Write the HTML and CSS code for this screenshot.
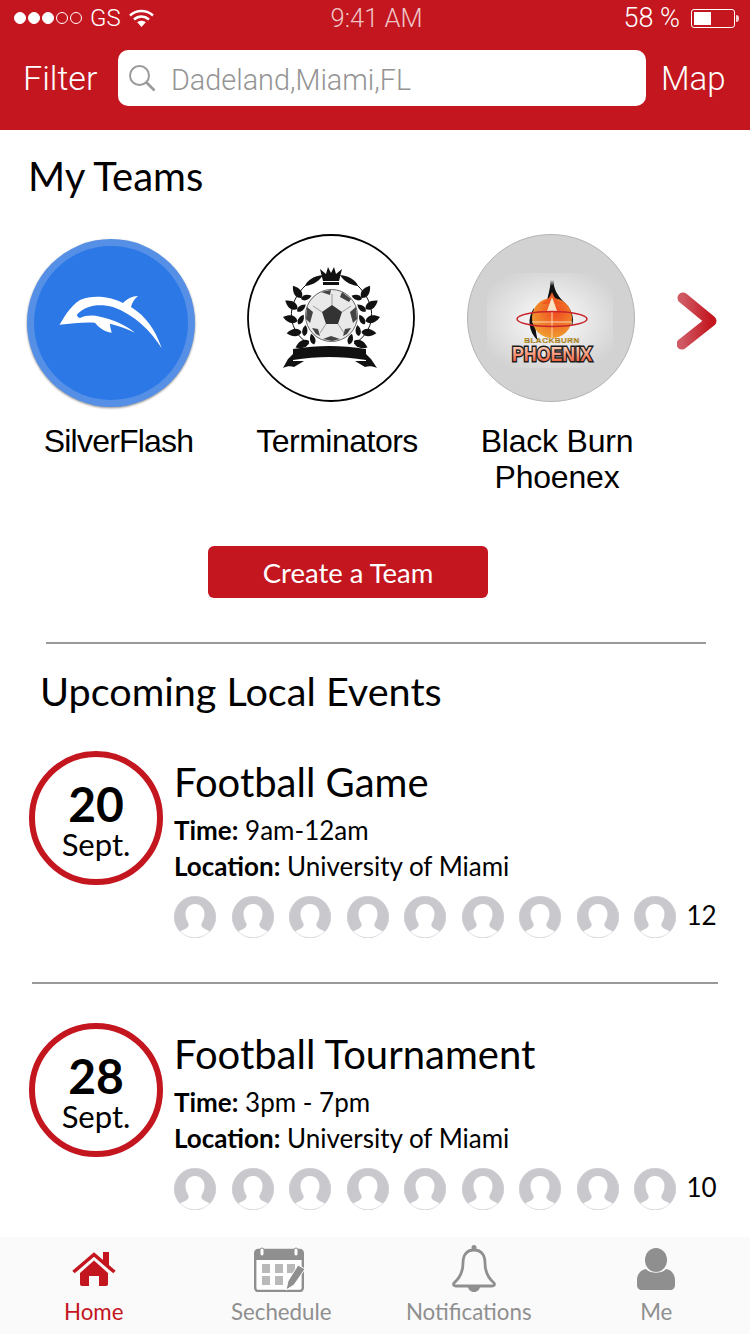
FILE: index.html
```html
<!DOCTYPE html>
<html lang="en">
<head>
  <meta charset="UTF-8">
  <meta name="viewport" content="width=device-width, initial-scale=1.0">
  <title>My Teams</title>
  <link rel="stylesheet" href="styles.css">
</head>
<body>
  <svg class="defs" width="0" height="0">
    <defs>
      <symbol id="avatar" viewBox="0 0 42 42">
        <circle cx="21" cy="21" r="21" fill="#c8c8cd"/>
        <path d="M21 8c-6 0-9.500 4.500-9.500 10 0 4 1.500 7 3 9.500 .5 2-.5 4-2.500 5-2.500 1.300-5 2-6 3.500C9 39.500 14.500 41.700 21 41.700S33 39.500 36 36c-1-1.500-3.500-2.200-6-3.500-2-1-3-3-2.500-5 1.500-2.500 3-5.500 3-9.500C30.500 12.500 27 8 21 8z" fill="#fff"/>
        <circle cx="21" cy="21" r="20.700" fill="none" stroke="#d4d4d8" stroke-width=".6"/>
      </symbol>
      <linearGradient id="chev" x1="0" x2="1" y1="0" y2="0">
        <stop offset="0" stop-color="#cf5a64"/>
        <stop offset="1" stop-color="#c3161f"/>
      </linearGradient>
      <radialGradient id="glow" cx=".5" cy=".5" r=".6">
        <stop offset="0" stop-color="#fdfdfd"/>
        <stop offset="1" stop-color="#d2d2d2"/>
      </radialGradient>
      <linearGradient id="phoenix-fill" x1="0" x2="0" y1="0" y2="1">
        <stop offset="0" stop-color="#fff1e0"/>
        <stop offset="1" stop-color="#ee4a22"/>
      </linearGradient>
      <radialGradient id="ball-fill" cx=".6" cy=".35" r=".7">
        <stop offset="0" stop-color="#f04a20"/>
        <stop offset="1" stop-color="#f0a030"/>
      </radialGradient>
      <path id="leaf" d="M0 0C5-3 5-9 0-15C-5-9-5-3 0 0z"/>
      <path id="leaf-small" d="M0 0C3.500-2 3.500-7 0-11C-3.500-7-3.500-2 0 0z"/>
    </defs>
  </svg>

  <div class="page">
    <header class="header">
      <div class="status-bar">
        <div class="status-left">
          <span class="dot on"></span><span class="dot on"></span><span class="dot on"></span><span class="dot"></span><span class="dot"></span>
          <span class="carrier">GS</span>
          <svg class="wifi" width="25" height="18" viewBox="0 0 25 18">
            <path d="M1 6.500C7.500 .5 17.500 .5 24 6.500" fill="none" stroke="#fff" stroke-width="2.400"/>
            <path d="M5 10.500c4.500-4 10.500-4 15 0" fill="none" stroke="#fff" stroke-width="2.400"/>
            <path d="M12.500 18l-4.300-4.700c2.500-2 6.100-2 8.600 0z" fill="#fff"/>
          </svg>
        </div>
        <div class="status-time">9:41 AM</div>
        <div class="status-right">
          <span class="percent">58 %</span>
          <span class="battery"><span class="battery-fill"></span></span>
          <span class="battery-nub"></span>
        </div>
      </div>
      <div class="nav-row">
        <span class="nav-link filter">Filter</span>
        <div class="search">
          <svg width="28" height="28" viewBox="0 0 28 28">
            <circle cx="11.500" cy="11.500" r="9.500" fill="none" stroke="#9a9a9a" stroke-width="2"/>
            <path d="M18.500 18.500l8 8" stroke="#9a9a9a" stroke-width="2.600"/>
          </svg>
          <span class="search-text">Dadeland,Miami,FL</span>
        </div>
        <span class="nav-link map">Map</span>
      </div>
    </header>

    <main class="content">
      <h2 class="my-teams-title">My Teams</h2>

      <div class="teams">
        <div class="team team-first">
          <svg class="team-logo dolphin" viewBox="0 0 168 168">
            <circle cx="84" cy="84" r="84" fill="#5590e6"/>
            <circle cx="84" cy="84" r="77" fill="#2b78e6"/>
            <path d="M32.300 86C37 79 42 68 53 61c14-6 32-3 43 3 4-4 9-7 15-7-4 3-6 7-7 11 15 9 25 24 30.700 41.300C124 92 108 76 86 68c-12-3-27-3-36.300 8 1 2 2 3 3.300 3 7-3 13-3 20-1.300 14 3 27 9 35 16-8-4-17-7-25-9 0 3 1 6 1.700 9-7-1-13-5-16.700-10-11-1-23 1-35.700 2z" fill="#fff"/>
          </svg>
          <div class="team-name">SilverFlash</div>
        </div>

        <div class="team">
          <svg class="team-logo" viewBox="0 0 168 168">
            <circle cx="84" cy="84" r="83" fill="#fff" stroke="#000" stroke-width="1.800"/>
            <!-- crown -->
            <path d="M76 47l-3-12 6 5 2-7 3 6 3-6 2 7 6-5-3 12z" fill="#111"/>
            <rect x="76" y="48" width="16" height="3" fill="#111"/>
            <!-- laurel, left branch then the same one mirrored -->
            <g class="laurel">
              <path class="stem" d="M62 110C42 98 36 72 60 50"/>
              <use href="#leaf" transform="rotate(-140 84 81) translate(84 47) rotate(25)"/>
              <use href="#leaf" transform="rotate(-120 84 81) translate(84 47) rotate(25)"/>
              <use href="#leaf" transform="rotate(-100 84 81) translate(84 47) rotate(25)"/>
              <use href="#leaf" transform="rotate(-80 84 81) translate(84 47) rotate(25)"/>
              <use href="#leaf" transform="rotate(-60 84 81) translate(84 47) rotate(25)"/>
              <use href="#leaf-small" transform="rotate(-150 84 81) translate(84 47) rotate(135)"/>
              <use href="#leaf-small" transform="rotate(-128 84 81) translate(84 47) rotate(135)"/>
              <use href="#leaf-small" transform="rotate(-106 84 81) translate(84 47) rotate(135)"/>
              <use href="#leaf-small" transform="rotate(-84 84 81) translate(84 47) rotate(135)"/>
              <use href="#leaf-small" transform="rotate(-62 84 81) translate(84 47) rotate(135)"/>
              <path d="M58 52c2-6 9-10 18-11-3 5-9 10-18 11z"/>
            </g>
            <g class="laurel" transform="translate(169 0) scale(-1 1)">
              <path class="stem" d="M62 110C42 98 36 72 60 50"/>
              <use href="#leaf" transform="rotate(-140 84 81) translate(84 47) rotate(25)"/>
              <use href="#leaf" transform="rotate(-120 84 81) translate(84 47) rotate(25)"/>
              <use href="#leaf" transform="rotate(-100 84 81) translate(84 47) rotate(25)"/>
              <use href="#leaf" transform="rotate(-80 84 81) translate(84 47) rotate(25)"/>
              <use href="#leaf" transform="rotate(-60 84 81) translate(84 47) rotate(25)"/>
              <use href="#leaf-small" transform="rotate(-150 84 81) translate(84 47) rotate(135)"/>
              <use href="#leaf-small" transform="rotate(-128 84 81) translate(84 47) rotate(135)"/>
              <use href="#leaf-small" transform="rotate(-106 84 81) translate(84 47) rotate(135)"/>
              <use href="#leaf-small" transform="rotate(-84 84 81) translate(84 47) rotate(135)"/>
              <use href="#leaf-small" transform="rotate(-62 84 81) translate(84 47) rotate(135)"/>
              <path d="M58 52c2-6 9-10 18-11-3 5-9 10-18 11z"/>
            </g>
            <!-- ball -->
            <circle cx="84.500" cy="81.500" r="26" fill="#e9e9e9" stroke="#666"/>
            <path d="M85 71l10 7-4 12H79l-4-12z" fill="#333"/>
            <path d="M74 58l9 3 1-5zM95 58l-2 5 9 5 2-3zM60 73l6 5-3 11-4-4zM109 73l-6 5 3 11 4-4zM76 105l8-3 9 3-8 2zM65 94l6 1 2 7-4-2zM104 94l-6 1-2 7 4-2z" fill="#444"/>
            <path d="M85 71V60M95 78l9-6M91 90l6 9M79 90l-6 9M75 78l-9-6" stroke="#999"/>
            <!-- ribbon -->
            <path d="M46 115c25-4 48-4 73 0v11c-25-4-48-4-73 0z" fill="#111"/>
            <path d="M46 120l-5 5-5 9c4-2 8-2 11-1l10-6-11 0zM119 120l5 5 6 9c-4-2-9-2-12-1l-10-6 11 0z" fill="#111"/>
          </svg>
          <div class="team-name">Terminators</div>
        </div>

        <div class="team team-wide">
          <svg class="team-logo" viewBox="0 0 168 168">
            <circle cx="84" cy="84" r="83.500" fill="#d2d2d2" stroke="#b4b4b4"/>
            <rect x="20" y="39" width="126" height="95" fill="url(#glow)"/>
            <!-- flame -->
            <path d="M84 46l1 6 1-6c1 9 4 15 10 21 8 7 12 16 9 25-1-10-6-17-14-22-3-2-5-4-6-7-1 3-3 5-6 7 2-8 4-15 5-24z" fill="#111"/>
            <path d="M67 74c-7 10-6 23 4 33-3-10-3-22-4-33z" fill="#111"/>
            <circle cx="85" cy="84" r="20" fill="url(#ball-fill)"/>
            <path d="M85 58c2 6 6 9 11 12l-22 0c5-3 9-6 11-12z" fill="#ee5a22"/>
            <path d="M85 63l5 14H80z" fill="#f9e2c8"/>
            <path d="M85 77v27M65 88h40" stroke="#fbd9b8" stroke-width="1"/>
            <ellipse cx="85" cy="85" rx="35" ry="7.500" fill="none" stroke="#c8242c" stroke-width="1.500"/>
            <text class="logo-small" x="85" y="109" text-anchor="middle">BLACKBURN</text>
            <text class="logo-big" x="85" y="127" text-anchor="middle" textLength="80" lengthAdjust="spacingAndGlyphs">PHOENIX</text>
          </svg>
          <div class="team-name">Black Burn<br>Phoenex</div>
        </div>

        <svg class="more" width="42" height="60" viewBox="0 0 42 60">
          <path d="M6 7l28 23L5 53" fill="none" stroke="url(#chev)" stroke-width="11" stroke-linecap="round" stroke-linejoin="round"/>
        </svg>
      </div>

      <div class="create-wrap">
        <button class="create-btn">Create a Team</button>
      </div>

      <hr class="rule rule-top">
      <h2 class="events-title">Upcoming Local Events</h2>

      <section class="event">
        <div class="date"><b>20</b><span>Sept.</span></div>
        <div class="event-info">
          <h3>Football Game</h3>
          <p><b>Time:</b> 9am-12am</p>
          <p><b>Location:</b> University of Miami</p>
          <div class="people">
            <svg class="person"><use href="#avatar"/></svg>
            <svg class="person"><use href="#avatar"/></svg>
            <svg class="person"><use href="#avatar"/></svg>
            <svg class="person"><use href="#avatar"/></svg>
            <svg class="person"><use href="#avatar"/></svg>
            <svg class="person"><use href="#avatar"/></svg>
            <svg class="person"><use href="#avatar"/></svg>
            <svg class="person"><use href="#avatar"/></svg>
            <svg class="person"><use href="#avatar"/></svg>
            <span class="count">12</span>
          </div>
        </div>
      </section>

      <hr class="rule rule-event">

      <section class="event">
        <div class="date"><b>28</b><span>Sept.</span></div>
        <div class="event-info">
          <h3>Football Tournament</h3>
          <p><b>Time:</b> 3pm - 7pm</p>
          <p><b>Location:</b> University of Miami</p>
          <div class="people">
            <svg class="person"><use href="#avatar"/></svg>
            <svg class="person"><use href="#avatar"/></svg>
            <svg class="person"><use href="#avatar"/></svg>
            <svg class="person"><use href="#avatar"/></svg>
            <svg class="person"><use href="#avatar"/></svg>
            <svg class="person"><use href="#avatar"/></svg>
            <svg class="person"><use href="#avatar"/></svg>
            <svg class="person"><use href="#avatar"/></svg>
            <svg class="person"><use href="#avatar"/></svg>
            <span class="count">10</span>
          </div>
        </div>
      </section>
    </main>

    <nav class="tabs">
      <div class="tab active">
        <svg width="44" height="48" viewBox="0 0 44 48">
          <path d="M1.500 28L22 10.500 42.500 28" fill="none" stroke="#c3161f" stroke-width="3.600"/>
          <path d="M31 8h6v15l-6-5z" fill="#c3161f"/>
          <path d="M8 29L22 16.500 36 29v11a2 2 0 0 1-2 2h-7V32h-10v10h-7a2 2 0 0 1-2-2z" fill="#c3161f"/>
        </svg>
        <span>Home</span>
      </div>
      <div class="tab">
        <svg width="54" height="48" viewBox="0 0 54 48">
          <rect x="1.200" y="6" width="47.600" height="41" rx="3" fill="#fff" stroke="#8f8f8f" stroke-width="2.400"/>
          <path d="M1 9a3 3 0 0 1 3-3h42a3 3 0 0 1 3 3v7H1z" fill="#8f8f8f"/>
          <rect x="6" y="4" width="4" height="8" rx="2" fill="#fff" stroke="#8f8f8f"/>
          <rect x="40" y="4" width="4" height="8" rx="2" fill="#fff" stroke="#8f8f8f"/>
          <g fill="#b9b9b9">
            <rect x="8" y="20" width="8" height="9"/><rect x="21" y="20" width="8" height="9"/><rect x="33" y="20" width="8" height="9"/>
            <rect x="8" y="32" width="8" height="9"/><rect x="21" y="32" width="8" height="9"/>
          </g>
          <path d="M44 21l7 4-11 16-8 5 2-9z" fill="#8f8f8f" stroke="#fff"/>
        </svg>
        <span>Sechedule</span>
      </div>
      <div class="tab">
        <svg width="54" height="48" viewBox="0 0 54 48">
          <path d="M32 6c-8 0-11 6-11 13 0 8-2 14-9 20-1 2 0 3 2 3h36c2 0 3-1 2-3-7-6-9-12-9-20 0-7-3-13-11-13z" fill="none" stroke="#8f8f8f" stroke-width="2.800"/>
          <circle cx="32" cy="3.500" r="2.500" fill="#8f8f8f"/>
          <path d="M26 42c0 3.500 2.500 6 6 6s6-2.500 6-6z" fill="#8f8f8f"/>
        </svg>
        <span>Notifications</span>
      </div>
      <div class="tab">
        <svg width="40" height="48" viewBox="0 0 40 48">
          <ellipse cx="20" cy="16" rx="11" ry="12" fill="#8f8f8f"/>
          <path d="M10 25c4 5 16 5 20 0 6 1 9 6 9 11v5c0 3-2 5-5 5H6c-3 0-5-2-5-5v-5c0-5 3-10 9-11z" fill="#8f8f8f"/>
        </svg>
        <span>Me</span>
      </div>
    </nav>
  </div>
</body>
</html>
```

FILE: styles.css
```css
* {
  box-sizing: border-box;
}
body {
  margin: 0;
  background-color: #fff;
  color: #000;
  font-family: Lato, "Open Sans", sans-serif;
}
.defs {
  position: absolute;
}
.page {
  display: flex;
  flex-direction: column;
  height: 1334px;
  overflow: hidden;
}

/* red header */
.header {
  height: 130px;
  flex: none;
  background-color: #c3161f;
  color: #fff;
}
.status-bar {
  display: grid;
  grid-template-columns: 1fr auto 1fr;
  align-items: center;
  height: 36px;
  padding: 0 11px 0 14px;
  font-family: Roboto, "Liberation Sans", sans-serif;
  font-weight: 300;
  font-size: 24px;
}
.status-left {
  display: flex;
  align-items: center;
}
.dot {
  width: 12px;
  height: 12px;
  margin-right: 2px;
  border: 1px solid #fff;
  border-radius: 50%;
}
.dot.on {
  background-color: #fff;
}
.carrier {
  margin: 0 8px 0 6px;
}
.status-time {
  font-size: 25.500px;
  color: #efc4c6;
}
.status-right {
  display: flex;
  align-items: center;
  justify-content: flex-end;
}
.percent {
  font-size: 27px;
}
.battery {
  width: 44px;
  height: 19px;
  margin-left: 11px;
  padding: 2px;
  border: 1px solid #fff;
  border-radius: 3px;
}
.battery-fill {
  display: block;
  width: 17px;
  height: 13px;
  background-color: #fff;
}
.battery-nub {
  width: 3px;
  height: 7px;
  margin-left: 1px;
  border-radius: 0 3px 3px 0;
  background-color: #f3d0d2;
}
.nav-row {
  display: flex;
  align-items: center;
  margin-top: 14px;
  padding-left: 23px;
}
.nav-link {
  font-family: Roboto, "Liberation Sans", sans-serif;
  font-weight: 300;
  font-size: 34px;
}
.filter {
  width: 95px;
  flex: none;
}
.map {
  margin-left: 15px;
  font-size: 33px;
}
.search {
  display: flex;
  align-items: center;
  width: 528px;
  height: 56px;
  flex: none;
  padding: 0 0 0 10px;
  border-radius: 10px;
  background-color: #fff;
}
.search-text {
  margin: 3px 0 0 15px;
  font-family: Roboto, "Liberation Sans", sans-serif;
  font-weight: 300;
  font-size: 28.800px;
  color: #949494;
}

/* teams */
.content {
  flex: 1;
  min-height: 0;
  overflow: hidden;
}
.my-teams-title {
  margin: 0;
  padding: 23px 0 0 28px;
  font-size: 40px;
  font-weight: 400;
  line-height: 46px;
}
.teams {
  display: flex;
  align-items: flex-start;
  margin-top: 35px;
  padding-left: 27px;
}
.team {
  width: 220px;
  flex: none;
}
.team-first {
  padding-top: 5px;
}
.team-logo {
  display: block;
  width: 168px;
  height: 168px;
}
.dolphin {
  filter: drop-shadow(0 1px 1px rgba(0, 0, 0, 0.45));
}
.laurel {
  fill: #111;
}
.stem {
  fill: none;
  stroke: #111;
}
.team-name {
  width: 180px;
  margin-top: 21px;
  font-family: "Liberation Sans", Arial, sans-serif;
  font-size: 32px;
  line-height: 36px;
  letter-spacing: -0.5px;
  text-align: center;
}
.team-first .team-name {
  margin-top: 16px;
  padding-left: 3px;
  letter-spacing: -0.8px;
}
.team-wide .team-name {
  letter-spacing: -0.2px;
}
.logo-small {
  font-family: "Liberation Sans", sans-serif;
  font-size: 8px;
  font-weight: 700;
  letter-spacing: 0.5px;
  fill: #e0a81e;
  stroke: #222;
  stroke-width: 0.2px;
}
.logo-big {
  font-family: "Liberation Sans", sans-serif;
  font-size: 21px;
  font-weight: 700;
  fill: url(#phoenix-fill);
  stroke: #1c1c1c;
  stroke-width: 3px;
  paint-order: stroke;
}
.more {
  flex: none;
  margin: 57px 0 0 -10px;
}
.create-wrap {
  margin-top: 51px;
  padding-left: 208px;
}
.create-btn {
  display: block;
  width: 280px;
  height: 52px;
  border: none;
  border-radius: 6px;
  background-color: #c3161f;
  color: #fff;
  font-family: Lato, sans-serif;
  font-size: 27.500px;
}

/* events */
.rule {
  height: 2px;
  margin: 0;
  border: none;
  background-color: #999;
}
.rule-top {
  margin: 44px 44px 0 46px;
}
.rule-event {
  margin: 44px 32px 39px;
}
.events-title {
  margin: 24px 0 37px 40px;
  font-size: 39.600px;
  font-weight: 400;
  line-height: 46px;
}
.event {
  display: flex;
  padding-left: 29px;
}
.date {
  display: flex;
  flex-direction: column;
  align-items: center;
  justify-content: center;
  width: 134px;
  height: 134px;
  flex: none;
  padding-top: 5px;
  border: 6px solid #c3161f;
  border-radius: 50%;
}
.date b {
  font-size: 48px;
  line-height: 46px;
}
.date span {
  font-size: 31px;
  line-height: 34px;
}
.event-info {
  margin-left: 12px;
  flex: 1;
  min-width: 0;
}
.event-info h3 {
  margin: 8px 0 7px -1px;
  font-size: 40px;
  font-weight: 400;
  line-height: 46px;
}
.event-info p {
  margin: 0 0 0 -1px;
  font-size: 26px;
  line-height: 36px;
}
.people {
  display: flex;
  align-items: center;
  gap: 15.500px;
  margin: 12px 0 0 -1px;
}
.person {
  display: block;
  width: 42px;
  height: 42px;
  flex: none;
}
.count {
  margin: -4px 0 0 -5px;
  font-size: 26px;
}

/* bottom tabs */
.tabs {
  display: grid;
  grid-template-columns: repeat(4, 1fr);
  flex: none;
  height: 97px;
  background-color: #fafafa;
}
.tab {
  display: flex;
  flex-direction: column;
  align-items: center;
  justify-content: flex-end;
  padding-bottom: 8px;
  color: #8f8f8f;
  font-size: 22.300px;
  line-height: 28px;
}
.tab svg {
  display: block;
  margin-bottom: 6px;
}
.tab.active {
  color: #c3161f;
}
```
